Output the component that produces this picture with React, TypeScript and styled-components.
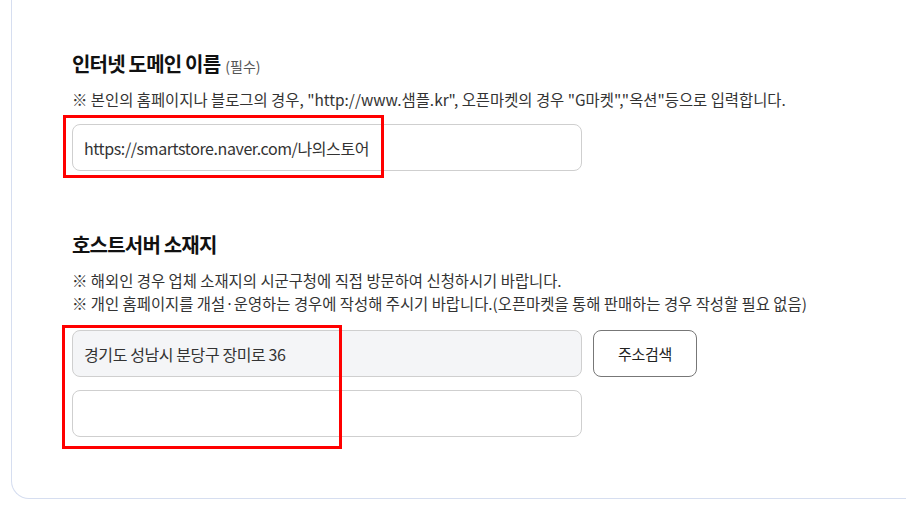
import React from 'react';
import styled, { createGlobalStyle } from 'styled-components';

const GlobalStyle = createGlobalStyle`
  html, body {
    margin: 0;
    padding: 0;
    background: #fff;
  }
  body {
    font-family: "Noto Sans CJK KR", "Noto Sans", sans-serif;
    color: #222;
  }
`;

const Card = styled.div`
  margin-left: 11px;
  width: 940px;
  border-left: 1px solid #d6def0;
  border-bottom: 1px solid #d6def0;
  border-bottom-left-radius: 18px;
  padding: 50px 0 61px 60px;
  box-sizing: border-box;
`;

const Section = styled.section<{ gapTop?: number }>`
  margin-top: ${({ gapTop }) => gapTop ?? 0}px;
  display: flex;
  flex-direction: column;
`;

const Title = styled.h2`
  margin: 0;
  font-size: 20px;
  font-weight: 700;
  letter-spacing: -0.8px;
  line-height: 28px;
  color: #111;
`;

const Required = styled.span`
  font-size: 14px;
  line-height: 20px;
  font-weight: 400;
  color: #555;
  letter-spacing: 0;
  margin-left: 5px;
`;

const Notes = styled.div`
  margin-top: 10px;
  display: flex;
  flex-direction: column;
`;

const Note = styled.p`
  margin: 0;
  font-size: 15.4px;
  line-height: 23px;
  color: #333;
  letter-spacing: 0;
`;

const FieldWrap = styled.div<{ gapTop: number }>`
  position: relative;
  margin-top: ${({ gapTop }) => gapTop}px;
  display: flex;
  flex-direction: column;
  gap: 13px;
`;

const Row = styled.div`
  display: flex;
  align-items: center;
  gap: 11px;
`;

const Input = styled.input<{ filled?: boolean }>`
  width: 510px;
  height: 47px;
  box-sizing: border-box;
  border: 1px solid #cfcfcf;
  border-radius: 8px;
  padding: 0 11px;
  font-family: inherit;
  font-size: 16px;
  letter-spacing: -0.4px;
  color: #333;
  background: ${({ filled }) => (filled ? '#f4f5f7' : '#fff')};
  outline: none;
`;

const SearchButton = styled.button`
  width: 104px;
  height: 47px;
  box-sizing: border-box;
  border: 1px solid #777;
  border-radius: 8px;
  background: #fff;
  font-family: inherit;
  font-size: 15px;
  letter-spacing: -0.3px;
  color: #222;
`;

const Highlight = styled.div<{ w: number; h: number; l: number; t: number }>`
  position: absolute;
  left: ${({ l }) => l}px;
  top: ${({ t }) => t}px;
  width: ${({ w }) => w}px;
  height: ${({ h }) => h}px;
  border: 3px solid #f00;
  box-sizing: border-box;
  pointer-events: none;
`;

export default function App() {
  return (
    <>
      <GlobalStyle />
      <Card>
        <Section>
          <Title>
            인터넷 도메인 이름<Required>(필수)</Required>
          </Title>
          <Notes>
            <Note>※ 본인의 홈페이지나 블로그의 경우, "http://www.샘플.kr", 오픈마켓의 경우 "G마켓","옥션"등으로 입력합니다.</Note>
          </Notes>
          <FieldWrap gapTop={13}>
            <Input readOnly value="https://smartstore.naver.com/나의스토어" />
            <Highlight l={-9} t={-9} w={321} h={63} />
          </FieldWrap>
        </Section>
        <Section gapTop={60}>
          <Title>호스트서버 소재지</Title>
          <Notes>
            <Note>※ 해외인 경우 업체 소재지의 시군구청에 직접 방문하여 신청하시기 바랍니다.</Note>
            <Note>※ 개인 홈페이지를 개설·운영하는 경우에 작성해 주시기 바랍니다.(오픈마켓을 통해 판매하는 경우 작성할 필요 없음)</Note>
          </Notes>
          <FieldWrap gapTop={15}>
            <Row>
              <Input filled readOnly value="경기도 성남시 분당구 장미로 36" />
              <SearchButton>주소검색</SearchButton>
            </Row>
            <Input readOnly value="" />
            <Highlight l={-10} t={-5} w={280} h={124} />
          </FieldWrap>
        </Section>
      </Card>
    </>
  );
}
